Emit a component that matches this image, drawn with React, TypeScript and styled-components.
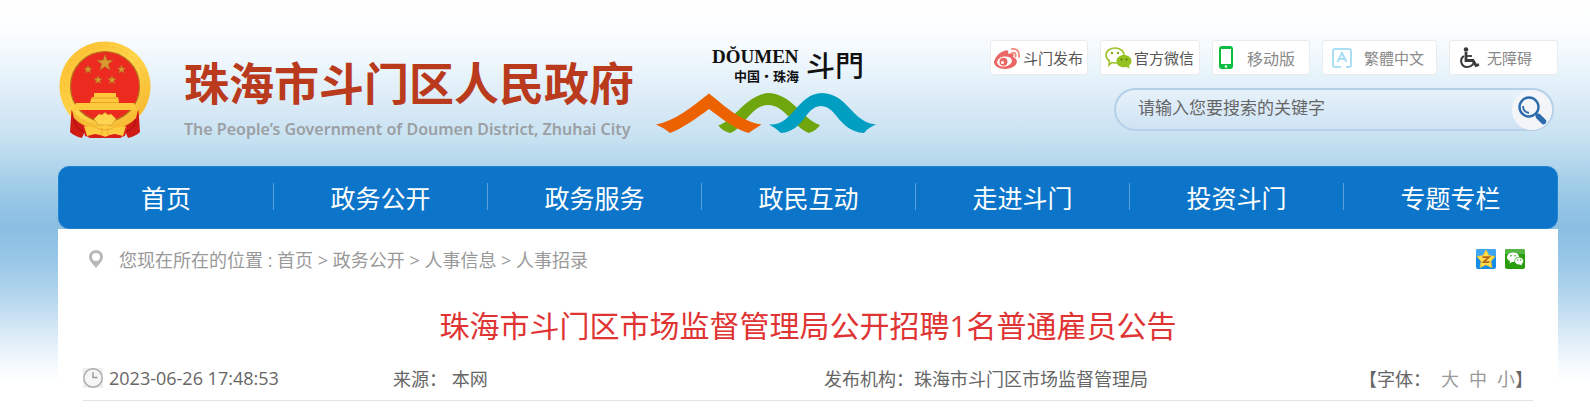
import React from "react";
import styled, { createGlobalStyle } from "styled-components";

const GlobalStyle = createGlobalStyle`
  *, *::before, *::after { box-sizing: border-box; }
  body {
    margin: 0;
    background: #fff;
    color: #666;
    font-family: "Open Sans", "Noto Sans CJK SC", sans-serif;
    font-size: 18px;
  }
  a { color: inherit; text-decoration: none; }
`;

const Page = styled.div`
  padding: 0 32px 0 58px;
  background: linear-gradient(
      to bottom,
      #ffffff 0, #fbfdff 33px, #e9f4fb 72px, #d4e7f5 115px, #c6e1f1 140px,
      #b2d5ec 165px, #9bcae7 192px, #8abee2 227px, #98c7e6 260px,
      #b6d8ee 300px, #dbebf7 335px, #f3f9fd 362px, #ffffff 385px
    ) no-repeat;
`;

const Header = styled.header`
  display: flex;
  justify-content: space-between;
  align-items: flex-start;
  height: 166px;
  padding-top: 40px;
`;

const Brand = styled.a`
  display: flex;
  align-items: flex-start;
`;

const BrandText = styled.div`
  width: 448px;
  margin: 12px 24px 0 32px;
  white-space: nowrap;
`;

const SiteName = styled.div`
  font: bold 45px/60px "Noto Sans CJK SC", sans-serif;
  color: #b93a1c;
`;

const SiteNameEn = styled.div`
  margin-top: 7px;
  font: 600 16px/20px "Noto Sans", sans-serif;
  color: #9b9fa3;
`;

const Tools = styled.div`
  display: flex;
  flex-direction: column;
  align-items: flex-end;
  gap: 13px;
`;

const Badges = styled.nav`
  display: flex;
  gap: 12px;
`;

const Badge = styled.a<{ $width: number; $gap: number; $pad: number; $dark?: boolean; $size?: number }>`
  display: flex;
  align-items: center;
  gap: ${(p) => p.$gap}px;
  width: ${(p) => p.$width}px;
  height: 35px;
  padding-left: ${(p) => p.$pad}px;
  border: 1px solid #e9ebed;
  border-radius: 3px;
  background: #fff;
  color: ${(p) => (p.$dark ? "#555" : "#888")};
  font-size: ${(p) => p.$size ?? 15}px;
  white-space: nowrap;
  svg { flex: none; }
`;

const Search = styled.form`
  display: flex;
  align-items: center;
  width: 440px;
  height: 43px;
  margin-right: 4px;
  border: 2px solid #b5d0e9;
  border-radius: 22px;
  background: linear-gradient(#e6f2fa, #cfe3f4);
`;

const SearchInput = styled.input`
  flex: 1;
  min-width: 0;
  padding: 0 0 4px 22px;
  border: 0;
  outline: 0;
  background: none;
  font: 17px "Open Sans", "Noto Sans CJK SC", sans-serif;
  color: #666;
  &::placeholder { color: #666; opacity: 1; }
`;

const SearchButton = styled.button`
  display: grid;
  place-items: center;
  width: 40px;
  height: 40px;
  padding: 0;
  border: 0;
  border-radius: 50%;
  background: #f4f5f8;
`;

const MainNav = styled.nav`
  display: flex;
  height: 63px;
  border: 1px solid #2383cf;
  border-radius: 11px;
  background: #0c75c9;
`;

const NavItem = styled.a`
  display: flex;
  flex: 1;
  align-items: center;
  justify-content: center;
  padding-bottom: 2px;
  color: #fff;
  font-size: 25px;
  white-space: nowrap;
  & + &::before {
    content: "";
    width: 1px;
    height: 27px;
    margin-right: auto;
    background: #5ba0da;
  }
  & + &::after {
    content: "";
    margin-left: auto;
  }
`;

const Content = styled.main`
  padding: 0 25px;
  background: #fff;
`;

const Location = styled.div`
  display: flex;
  align-items: center;
  height: 60px;
  padding: 0 8px 0 6px;
  color: #999;
`;

const Crumbs = styled.nav`
  margin: 0 auto 0 16px;
  white-space: nowrap;
`;

const Share = styled.div`
  display: flex;
  gap: 9px;
  a { display: block; height: 20px; }
`;

const Title = styled.h1`
  margin: 15px 0 0;
  font-size: 30px;
  line-height: 44px;
  font-weight: 400;
  text-align: center;
  color: #e03434;
`;

const Meta = styled.div`
  display: grid;
  grid-template-columns: 310px 431px 1fr auto;
  align-items: center;
  height: 53px;
  margin-bottom: 14px;
  padding: 8px 0 0 0;
  border-bottom: 1px solid #e3e3e3;
  white-space: nowrap;
`;

const Time = styled.time`
  display: flex;
  align-items: center;
  gap: 6px;
`;

const FontSizes = styled.div`
  display: flex;
`;

const SizeButton = styled.button`
  padding: 0;
  margin-left: 10px;
  border: 0;
  background: none;
  color: #999;
  font: inherit;
`;

const star = (cx: number, cy: number, r: number) =>
  Array.from({ length: 10 }, (_, i) => {
    const a = -Math.PI / 2 + (i * Math.PI) / 5;
    const d = i % 2 ? r * 0.4 : r;
    return `${(cx + d * Math.cos(a)).toFixed(2)},${(cy + d * Math.sin(a)).toFixed(2)}`;
  }).join(" ");

const Emblem = () => (
  <svg width="94" height="100" viewBox="0 0 94 100" aria-hidden="true">
    <defs>
      <linearGradient id="gold" x1="0" y1="0" x2="1" y2="1">
        <stop offset="0" stopColor="#fbbb2c" />
        <stop offset=".5" stopColor="#ffd54a" />
        <stop offset="1" stopColor="#f3b02a" />
      </linearGradient>
    </defs>
    <ellipse cx="47" cy="46.500" rx="45.500" ry="45" fill="url(#gold)" />
    <ellipse cx="47" cy="46.500" rx="40" ry="40" fill="none" stroke="#f5bd3a" strokeWidth="1" strokeDasharray="3 4" />
    <ellipse cx="47" cy="46.500" rx="34.500" ry="35" fill="#ec2a20" stroke="#b5741c" strokeWidth="1.200" />
    <g fill="#d99a30" stroke="#a87222" strokeWidth=".5">
      <polygon points={star(47, 23, 8.5)} />
      <polygon points={star(30, 29.5, 4.4)} />
      <polygon points={star(63.5, 29.5, 4.4)} />
      <polygon points={star(40, 40, 4.4)} />
      <polygon points={star(54, 40, 4.4)} />
    </g>
    <path d="M36 53h22v4h2l1 5H32l2-5h2z" fill="#ffc93c" />
    <path d="M32 62h29v2H32z" fill="#f0a028" />
    <path d="M18 63h58l3 7H15z" fill="#ffc93c" />
    <path d="M34 58h26" stroke="#e39a25" strokeWidth="1" />
    <path d="M13.500 70l-1.500 22q4 4 12 6l5-12q-9-5-15.500-16zM80.500 70l1.500 22q-4 4-12 6l-5-12q9-5 15.500-16z" fill="#cf1a15" />
    <path d="M16 80q2 9 10 12M78 80q-2 9-10 12" fill="none" stroke="#a60f0c" />
    <path d="M14 70q8 11 22 13.500l3 3.500h16l3-3.500Q72 81 80 70l-2 8q-8 9-22 11H38q-14-2-22-11z" fill="#f6bc33" />
    <path d="M24 85q10 5 23 5t23-5l-3 11-8 2H35l-8-2z" fill="#d91d17" />
    <path d="M36 79l5-5 3 1 3-2.500 3 2.500 3-1 5 5-4 6H40z" fill="#ffd451" stroke="#dc9a2b" strokeWidth=".8" />
    <path d="M26 86l12 2 9-3 9 3 12-2-3 10-8-2-5 1-5 2-5-2-5-1-8 2z" fill="#ffcb40" />
    <path d="M30 98q6-4 11-3l6 2 6-2q5-1 11 3z" fill="#d91d17" />
    <path d="M39 88q8 4 16 0M44 88v7M50 88v7" stroke="#e0a02c" fill="none" strokeWidth=".8" />
  </svg>
);

const DoumenLogo = () => (
  <svg width="224" height="96" viewBox="0 0 224 96" role="img" aria-label="DŎUMEN">
    <g fill="#111">
      <text x="56" y="23" fontFamily="Liberation Serif, serif" fontWeight="700" fontSize="19">DŎUMEN</text>
      <text x="78" y="41" fontFamily="Noto Sans CJK SC, sans-serif" fontWeight="700" fontSize="13">中国·珠海</text>
      <text x="150" y="37" fontFamily="Noto Sans CJK TC, sans-serif" fontWeight="500" fontSize="29">斗門</text>
    </g>
    <path d="M62.300 85.300C78 81 90 54 113 53c23 1 34 27 51 32q-3 5-11 8c-16-6-24-28-41-28-17 0-25 24-38 28q-8-2-11.700-7.700" fill="#6fa60e" />
    <path d="M0 84.500C19 81 36 67 53 53.500 70 67 84 81 105.500 84.500L92.500 93C77 88 65 78 53 69 41 78 27 88 14 93 8 88 5 87 0 84.500Z" fill="#ec6200" />
    <path d="M113 84.500c24 2 28-31 53-31.500 26 .5 29 29 54 31.500q-8 3-12 8.500c-26-2-26-26-43-27-17 1-16 25-40 27q-5-5-12-8.500Z" fill="#009fc2" />
  </svg>
);

const WeiboIcon = () => (
  <svg width="27" height="24" viewBox="0 0 27 24" aria-hidden="true">
    <path d="M10 5c4-2 5 0 4 3 4-2 7 0 5 3 8 3 3 12-8 12C5 23 0 20 0 16 1 11 6 6 10 5Z" fill="#ea6766" />
    <ellipse cx="10.500" cy="15.500" rx="7.500" ry="5" fill="#fff" transform="rotate(-10 10.500 15.500)" />
    <circle cx="9.500" cy="15.800" r="4" fill="#ea6766" />
    <circle cx="8.500" cy="16.500" r="1.500" fill="#fff" />
    <path d="M18 3c5-1 8 3 7 8M18 7c3-1 4 1 3.500 3.500" fill="none" stroke="#f08a7b" strokeWidth="1.800" strokeLinecap="round" />
  </svg>
);

const WechatIcon = () => (
  <svg width="27" height="23" viewBox="0 0 27 23" aria-hidden="true">
    <path d="M10 2c5 0 9 3 9 7 0 5-4 8-9 8l-3-.5L4 19l.500-4C2.500 13.500 1 12 1 9c0-4 4-7 9-7Z" fill="#fff" stroke="#9bc12a" strokeWidth="1.600" />
    <circle cx="7" cy="7" r="1.200" fill="#83a51d" /><circle cx="13" cy="7" r="1.200" fill="#83a51d" />
    <path d="M19 9c4 0 7.500 2.500 7.500 6 0 2-1 3.500-2.500 4.500l.500 3-3-1.500C16 22 11.500 20 11.500 15c0-3.500 3.500-6 7.500-6Z" fill="#94c11f" />
    <circle cx="16.500" cy="13.500" r="1" fill="#527014" /><circle cx="21.500" cy="13.500" r="1" fill="#527014" />
  </svg>
);

const PhoneIcon = () => (
  <svg width="14" height="23" viewBox="0 0 14 23" aria-hidden="true">
    <rect width="14" height="23" rx="3" fill="#0abf3f" />
    <rect x="2" y="3" width="10" height="15" fill="#fff" />
    <circle cx="7" cy="20.500" r="1.300" fill="#fff" />
  </svg>
);

const LetterIcon = () => (
  <svg width="20" height="20" viewBox="0 0 20 20" aria-hidden="true" fill="none" stroke="#a9def5" strokeWidth="2">
    <path d="M9 19H3q-2 0-2-2V3q0-2 2-2h14q2 0 2 2v14q0 2-2 2h-3" />
    <path d="M5.500 14 10 5l4.500 9M7 11h6" />
  </svg>
);

const WheelchairIcon = () => (
  <svg width="20" height="21" viewBox="0 0 20 21" aria-hidden="true" fill="none" stroke="#3a3a3a">
    <circle cx="6" cy="2.500" r="2.300" fill="#3a3a3a" stroke="none" />
    <path d="M6 5v8.500h7l3 5 3-1" strokeWidth="2.800" />
    <path d="M6 9h6" strokeWidth="1.800" />
    <path d="M4 9c-5 3-3 11 3 11 4 0 6-2 7-5" strokeWidth="2" />
  </svg>
);

const SearchIcon = () => (
  <svg width="30" height="30" viewBox="0 0 30 30" aria-hidden="true" fill="none" stroke="#2c6cac">
    <circle cx="12" cy="12" r="9.500" strokeWidth="2.400" />
    <path d="M6 11q0 6 6 7" strokeWidth="1.800" />
    <path d="m18.500 18.500 3 3" strokeWidth="2.500" />
    <path d="m21.500 21.500 5 5" strokeWidth="5.500" strokeLinecap="round" />
  </svg>
);

const PinIcon = () => (
  <svg width="14" height="18" viewBox="0 0 14 18" aria-hidden="true">
    <path fillRule="evenodd" d="M7 0a7 7 0 0 1 7 7c0 4-4 7-7 11C4 14 0 11 0 7a7 7 0 0 1 7-7Zm0 3a4 4 0 1 0 0 8 4 4 0 0 0 0-8Z" fill="#b8b8b8" />
  </svg>
);

const ClockIcon = () => (
  <svg width="20" height="20" viewBox="0 0 20 20" aria-hidden="true">
    <rect width="20" height="20" fill="#eee" />
    <circle cx="10" cy="10" r="9.200" fill="#f5f5f5" stroke="#a9a9a9" strokeWidth="1.400" />
    <path d="M10 4v5.500h4.500" fill="none" stroke="#999" strokeWidth="1.400" />
  </svg>
);

const QzoneIcon = () => (
  <svg width="20" height="20" viewBox="0 0 20 20" aria-hidden="true">
    <rect width="20" height="20" rx="2" fill="#168ce9" />
    <path d="M2 0h16q2 0 2 2v5H0V2q0-2 2-2" fill="#3ea6f0" />
    <polygon points="10,1 12.900,6.600 19,7.600 14.900,12 15.800,18.500 10,15.700 4.200,18.500 5.100,12 1,7.600 7.100,6.600" fill="#ffe04a" stroke="#f5c331" strokeWidth=".8" strokeLinejoin="round" />
    <path d="M6.500 8.200h6.500l-5.500 5h6" fill="none" stroke="#b5651a" strokeWidth="1.700" />
  </svg>
);

const ShareWechatIcon = () => (
  <svg width="20" height="20" viewBox="0 0 20 20" aria-hidden="true">
    <rect width="20" height="20" rx="2" fill="#2b9e10" />
    <path d="M2 0h16q2 0 2 2v3H0V2q0-2 2-2" fill="#55b545" />
    <path d="M8 3.500c4 0 6 2 6 4.500-3 0-5 2-4.500 5H7l-2.500 1.500L5 12C3 11.500 2 10 2 8.300 2 5.500 4.500 3.500 8 3.500Z" fill="#fff" />
    <path d="M14 8.500c2.500 0 4.300 1.600 4.300 3.500 0 1.300-.7 2.300-1.800 3l.5 1.800-2-1.300c-3 .3-5-1.200-5-3.500 0-2 1.800-3.500 4-3.500Z" fill="#fff" />
    <g fill="#2b9e10"><circle cx="6" cy="6.700" r=".8" /><circle cx="10" cy="6.700" r=".8" /><circle cx="12.700" cy="11" r=".7" /><circle cx="15.700" cy="11" r=".7" /></g>
  </svg>
);

const NAV = ["首页", "政务公开", "政务服务", "政民互动", "走进斗门", "投资斗门", "专题专栏"];
const CRUMBS = ["首页", "政务公开", "人事信息", "人事招录"];

export default function App() {
  return (
    <>
      <GlobalStyle />
      <Page>
        <Header>
          <Brand href="#">
            <Emblem />
            <BrandText>
              <SiteName>珠海市斗门区人民政府</SiteName>
              <SiteNameEn>The People’s Government of Doumen District, Zhuhai City</SiteNameEn>
            </BrandText>
            <DoumenLogo />
          </Brand>
          <Tools>
            <Badges>
              <Badge href="#" $width={98} $pad={3} $gap={2} $dark><WeiboIcon />斗门发布</Badge>
              <Badge href="#" $width={100} $pad={4} $gap={2} $dark><WechatIcon />官方微信</Badge>
              <Badge href="#" $width={98} $pad={6} $gap={14} $size={16}><PhoneIcon />移动版</Badge>
              <Badge href="#" $width={115} $pad={9} $gap={12}><LetterIcon />繁體中文</Badge>
              <Badge href="#" $width={109} $pad={10} $gap={7}><WheelchairIcon />无障碍</Badge>
            </Badges>
            <Search onSubmit={(e) => e.preventDefault()}>
              <SearchInput aria-label="搜索" placeholder="请输入您要搜索的关键字" />
              <SearchButton aria-label="搜索"><SearchIcon /></SearchButton>
            </Search>
          </Tools>
        </Header>
        <MainNav>
          {NAV.map((n) => <NavItem href="#" key={n}>{n}</NavItem>)}
        </MainNav>
        <Content>
          <Location>
            <PinIcon />
            <Crumbs>
              您现在所在的位置 :{" "}
              {CRUMBS.map((c, i) => (
                <React.Fragment key={c}>{i > 0 && " > "}<a href="#">{c}</a></React.Fragment>
              ))}
            </Crumbs>
            <Share>
              <a href="#" aria-label="QQ空间"><QzoneIcon /></a>
              <a href="#" aria-label="微信"><ShareWechatIcon /></a>
            </Share>
          </Location>
          <Title>珠海市斗门区市场监督管理局公开招聘1名普通雇员公告</Title>
          <Meta>
            <Time><ClockIcon />2023-06-26 17:48:53</Time>
            <span>来源： 本网</span>
            <span>发布机构：珠海市斗门区市场监督管理局</span>
            <FontSizes>
              【字体：
              <SizeButton>大</SizeButton>
              <SizeButton>中</SizeButton>
              <SizeButton>小</SizeButton>】
            </FontSizes>
          </Meta>
        </Content>
      </Page>
    </>
  );
}
